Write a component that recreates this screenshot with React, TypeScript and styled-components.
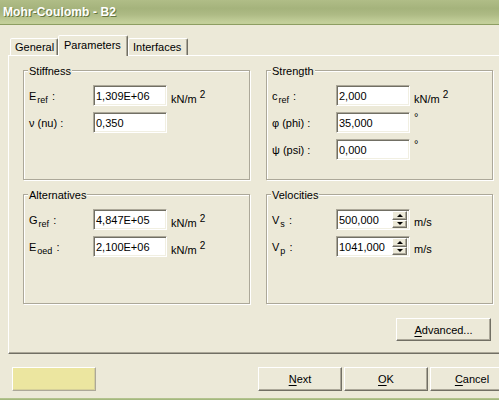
import React from 'react'
import styled, { createGlobalStyle } from 'styled-components'

const face = '#ece9d8'
const shadow = '#aca899'
const darkShadow = '#716f64'
const light = '#f1efe2'

const GlobalStyle = createGlobalStyle`
  html, body {
    margin: 0;
    padding: 0;
    overflow: hidden;
    background: ${face};
  }
  body {
    font-family: "Liberation Sans", Tahoma, Arial, sans-serif;
    font-size: 11px;
    color: #000;
  }
`

const Window = styled.div`
  width: 522px;
  height: 400px;
  display: flex;
  flex-direction: column;
  background: ${face};
`

const TitleBar = styled.div`
  flex: none;
  height: 24px;
  padding-left: 3px;
  display: flex;
  align-items: center;
  border-bottom: 1px solid #8d9e62;
  background: linear-gradient(
    to bottom,
    #b0bd87 0%,
    #a5b37c 35%,
    #adba84 60%,
    #c3cf9a 92%
  );
`

const TitleText = styled.span`
  font-size: 12px;
  font-weight: bold;
  color: #fff;
  text-shadow: 1px 1px 0 #66763f;
  letter-spacing: 0.1px;
`

const Client = styled.div`
  flex: 1;
  padding: 10px 8px 0 8px;
  display: flex;
  flex-direction: column;
`

const TabStrip = styled.div`
  position: relative;
  z-index: 1;
  height: 20px;
  padding-left: 2px;
  display: flex;
  align-items: flex-end;
`

const Tab = styled.div<{ $active?: boolean; $width: number }>`
  box-sizing: border-box;
  width: ${(p) => p.$width}px;
  height: ${(p) => (p.$active ? 21 : 17)}px;
  margin-bottom: ${(p) => (p.$active ? -1 : 0)}px;
  padding: ${(p) => (p.$active ? '0 0 2px 5px' : '0 0 0 4px')};
  display: flex;
  align-items: center;
  background: ${face};
  border: 1px solid;
  border-bottom: none;
  border-color: #fff ${darkShadow} transparent #fff;
  border-radius: 2px 2px 0 0;
  box-shadow: inset -1px 0 0 ${shadow};
  white-space: nowrap;
`

const TabPanel = styled.div`
  box-sizing: border-box;
  width: 501px;
  height: 299px;
  padding: 14px 0 0 14px;
  display: flex;
  flex-direction: column;
  border: 1px solid;
  border-color: #fff ${darkShadow} ${darkShadow} #fff;
  box-shadow: inset -1px -1px 0 ${shadow};
`

const GroupGrid = styled.div`
  width: 470px;
  display: grid;
  grid-template-columns: 227px 227px;
  grid-auto-rows: 110px;
  column-gap: 16px;
  row-gap: 14px;
`

const Group = styled.div`
  position: relative;
  box-sizing: border-box;
  border: 1px solid ${shadow};
  box-shadow: inset 1px 1px 0 #fff, 1px 1px 0 #fff;
  padding: 14px 0 0 5px;
  display: flex;
  flex-direction: column;
  gap: 6px;
`

const Caption = styled.span`
  position: absolute;
  top: -6px;
  left: 4px;
  padding: 0 1px;
  line-height: 13px;
  background: ${face};
`

const Field = styled.div`
  height: 21px;
  display: grid;
  grid-template-columns: 60px 74px auto;
  column-gap: 4px;
  align-items: center;
`

const Label = styled.span`
  white-space: nowrap;
`

const Sub = styled.span`
  font-size: 9px;
  position: relative;
  top: 3px;
  margin-left: 1px;
  margin-right: 1px;
`

const Sunken = styled.div`
  box-sizing: border-box;
  width: 74px;
  height: 21px;
  display: flex;
  align-items: center;
  background: #fff;
  border: 1px solid;
  border-color: ${shadow} #fff #fff ${shadow};
  box-shadow: inset 1px 1px 0 ${darkShadow}, inset -1px -1px 0 ${light};
`

const EditText = styled.span`
  flex: 1;
  padding-left: 2px;
  white-space: nowrap;
`

const SpinColumn = styled.div`
  width: 15px;
  height: 17px;
  margin-right: 2px;
  display: flex;
  flex-direction: column;
`

const SpinButton = styled.div<{ $down?: boolean }>`
  box-sizing: border-box;
  flex: 1;
  display: flex;
  align-items: center;
  justify-content: center;
  background: ${face};
  border: 1px solid;
  border-color: #fff ${darkShadow} ${darkShadow} #fff;
  box-shadow: inset -1px -1px 0 ${shadow};

  &::after {
    content: '';
    width: 0;
    height: 0;
    border-left: 3px solid transparent;
    border-right: 3px solid transparent;
    ${(p) =>
      p.$down
        ? 'border-top: 3px solid #000;'
        : 'border-bottom: 3px solid #000;'}
  }
`

const Unit = styled.span<{ $raised?: boolean; $shift?: number }>`
  white-space: nowrap;
  align-self: ${(p) => (p.$raised ? 'start' : 'center')};
  position: relative;
  top: ${(p) => p.$shift ?? 0}px;
`

const Sup = styled.span`
  font-size: 10px;
  position: relative;
  top: -5px;
  margin-left: 3px;
`

const PanelFooter = styled.div`
  width: 470px;
  margin-top: 14px;
  display: flex;
  justify-content: flex-end;
`

const Button = styled.button<{ $width?: number; $height?: number }>`
  box-sizing: border-box;
  width: ${(p) => p.$width ?? 84}px;
  height: ${(p) => p.$height ?? 24}px;
  margin: 0;
  padding: 0;
  background: ${face};
  color: #000;
  font: inherit;
  border: 1px solid;
  border-color: #fff ${darkShadow} ${darkShadow} #fff;
  box-shadow: inset -1px -1px 0 ${shadow};
  cursor: default;

  u {
    text-decoration-thickness: 1px;
    text-underline-offset: 2px;
  }
`

const AdvancedButton = styled(Button)`
  margin-right: 2px;
`

const DialogFooter = styled.div`
  margin-top: 13px;
  padding-left: 4px;
  height: 24px;
  display: flex;
  align-items: center;
`

const Swatch = styled.div`
  box-sizing: border-box;
  width: 84px;
  height: 24px;
  background: #ece6a0;
  border: 1px solid;
  border-color: #fff ${shadow} ${shadow} #fff;
  box-shadow: inset -1px -1px 0 #d6d09a;
`

const ButtonGroup = styled.div`
  margin-left: auto;
  display: flex;
  gap: 2px;
`

const BottomFrame = styled.div`
  flex: none;
  height: 2px;
  background: linear-gradient(to bottom, #b9c894, #9db377);
`

type Row = {
  label: React.ReactNode
  value: string
  unit?: 'kN' | 'deg' | 'ms'
  spin?: boolean
}

type GroupDef = { title: string; rows: Row[] }

const groups: GroupDef[] = [
  {
    title: 'Stiffness',
    rows: [
      { label: <>E<Sub>ref</Sub> :</>, value: '1,309E+06', unit: 'kN' },
      { label: <>ν (nu) :</>, value: '0,350' },
    ],
  },
  {
    title: 'Strength',
    rows: [
      { label: <>c<Sub>ref</Sub> :</>, value: '2,000', unit: 'kN' },
      { label: <>φ (phi) :</>, value: '35,000', unit: 'deg' },
      { label: <>ψ (psi) :</>, value: '0,000', unit: 'deg' },
    ],
  },
  {
    title: 'Alternatives',
    rows: [
      { label: <>G<Sub>ref</Sub> :</>, value: '4,847E+05', unit: 'kN' },
      { label: <>E<Sub>oed</Sub> :</>, value: '2,100E+06', unit: 'kN' },
    ],
  },
  {
    title: 'Velocities',
    rows: [
      { label: <>V<Sub>s</Sub> :</>, value: '500,000', unit: 'ms', spin: true },
      { label: <>V<Sub>p</Sub> :</>, value: '1041,000', unit: 'ms', spin: true },
    ],
  },
]

const UnitText = ({ unit }: { unit?: Row['unit'] }) => {
  if (unit === 'kN')
    return (
      <Unit $shift={3}>
        kN/m<Sup>2</Sup>
      </Unit>
    )
  if (unit === 'deg')
    return (
      <Unit $raised $shift={-1}>
        °
      </Unit>
    )
  if (unit === 'ms') return <Unit $shift={2}>m/s</Unit>
  return <span />
}

const App = () => (
  <>
    <GlobalStyle />
    <Window>
      <TitleBar>
        <TitleText>Mohr-Coulomb - B2</TitleText>
      </TitleBar>
      <Client>
        <TabStrip>
          <Tab $width={48}>General</Tab>
          <Tab $width={70} $active>
            Parameters
          </Tab>
          <Tab $width={60}>Interfaces</Tab>
        </TabStrip>
        <TabPanel>
          <GroupGrid>
            {groups.map((g) => (
              <Group key={g.title}>
                <Caption>{g.title}</Caption>
                {g.rows.map((r) => (
                  <Field key={r.value}>
                    <Label>{r.label}</Label>
                    <Sunken>
                      <EditText>{r.value}</EditText>
                      {r.spin && (
                        <SpinColumn>
                          <SpinButton />
                          <SpinButton $down />
                        </SpinColumn>
                      )}
                    </Sunken>
                    <UnitText unit={r.unit} />
                  </Field>
                ))}
              </Group>
            ))}
          </GroupGrid>
          <PanelFooter>
            <AdvancedButton $width={95} $height={23}>
              <u>A</u>dvanced...
            </AdvancedButton>
          </PanelFooter>
        </TabPanel>
        <DialogFooter>
          <Swatch />
          <ButtonGroup>
            <Button>
              <u>N</u>ext
            </Button>
            <Button>
              <u>O</u>K
            </Button>
            <Button>
              <u>C</u>ancel
            </Button>
          </ButtonGroup>
        </DialogFooter>
      </Client>
      <BottomFrame />
    </Window>
  </>
)

export default App
